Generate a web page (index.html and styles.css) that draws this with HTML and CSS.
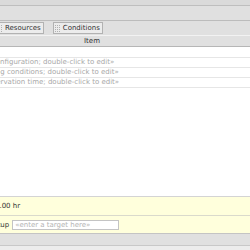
FILE: index.html
```
<!DOCTYPE html>
<html lang="en">
<head>
    <meta charset="UTF-8">
    <title>Observation Editor</title>
    <link rel="stylesheet" href="styles.css">
</head>
<body>
    <div class="window">
        <div class="topbar"></div>
        <div class="toolbar"></div>

        <!-- tab buttons -->
        <div class="tabs">
            <button class="tab first"><span class="grip"></span>Resources</button>
            <button class="tab"><span class="grip"></span>Conditions</button>
        </div>

        <!-- table header, scrolled to the left -->
        <div class="header">
            <div class="header-inner">Item</div>
        </div>

        <div class="rows">
            <div class="row blank"></div>
            <div class="row"><span class="cell">«enter setup configuration; double-click to edit»</span></div>
            <div class="row"><span class="cell">«enter observing conditions; double-click to edit»</span></div>
            <div class="row"><span class="cell">«enter the observation time; double-click to edit»</span></div>
        </div>

        <div class="panel time">
            <span class="shift">Total time: 1.00 hr</span>
        </div>
        <div class="panel target">
            <span class="shift">Target lookup</span>
            <input type="text" class="target-input" placeholder="«enter a target here»">
        </div>
        <div class="statusbar"></div>
        <div class="bottom"></div>
    </div>
</body>
</html>
```

FILE: styles.css
```
body {
    margin: 0;
    padding: 0;
    font-family: "DejaVu Sans", sans-serif;
    font-size: 7px;
    background: #ffffff;
}
.window {
    width: 250px;
    height: 250px;
    display: flex;
    flex-direction: column;
    overflow: hidden;
}
.topbar {
    height: 5px;
    background: #dadada;
    border-bottom: 1px solid #bebebe;
}
.toolbar {
    height: 14px;
    background: #e0e0e0;
    border-bottom: 1px solid #bcbcbc;
}
.tabs {
    height: 14px;
    background: #e0e0e0;
    display: flex;
    align-items: center;
    gap: 9px;
}
.tab {
    display: flex;
    align-items: center;
    height: 12px;
    padding: 0 2px 0 1px;
    margin: 0;
    border: 1px solid #b2b2b2;
    background: #ececec;
    color: #333;
    font-family: inherit;
    font-size: 7px;
    line-height: 10px;
}
.tab.first {
    margin-left: -5px;
}
.grip {
    width: 5px;
    height: 8px;
    margin-right: 3px;
    background-image:
        repeating-linear-gradient(#ececec 0 1px, transparent 1px 2px),
        repeating-linear-gradient(90deg, #b0b0b0 0 1px, transparent 1px 2px);
}
.header {
    height: 10px;
    background: #e0e0e0;
    border-top: 1px solid #f2f2f2;
    border-bottom: 1px solid #b6b6b6;
    overflow: hidden;
}
.header-inner {
    margin-left: -55px;
    width: 294px;
    text-align: center;
    line-height: 10px;
    color: #333;
}
.rows {
    flex: 1;
    overflow: hidden;
}
.row {
    height: 9px;
    border-bottom: 1px solid #e6e6e6;
    line-height: 9px;
    white-space: nowrap;
}
.row.blank {
    height: 10px;
}
.cell {
    display: block;
    margin-left: -55px;
    color: #a8a8a8;
}
.panel {
    background: #ffffdc;
    display: flex;
    align-items: center;
    white-space: nowrap;
    color: #333;
}
.panel .shift {
    flex-shrink: 0;
}
.time .shift {
    margin-left: -44px;
}
.target .shift {
    margin-left: -38px;
}
.time {
    height: 18px;
    border-top: 1px solid #d4d4d4;
}
.target {
    height: 17px;
    border-top: 1px solid #dadacc;
}
.target-input {
    flex-shrink: 0;
    width: 107px;
    height: 10px;
    margin: 1px 0 0 3px;
    padding: 0 2px;
    border: 1px solid #c4c4c4;
    background: white;
    font-family: inherit;
    font-size: 7px;
    box-sizing: border-box;
}
.target-input::placeholder {
    color: #b4b4b4;
}
.statusbar {
    height: 11px;
    background: #e0e0e0;
    border-top: 1px solid #c4c4c4;
    border-bottom: 1px solid #c8c8c8;
}
.bottom {
    height: 4px;
    background: #ececec;
}
```
